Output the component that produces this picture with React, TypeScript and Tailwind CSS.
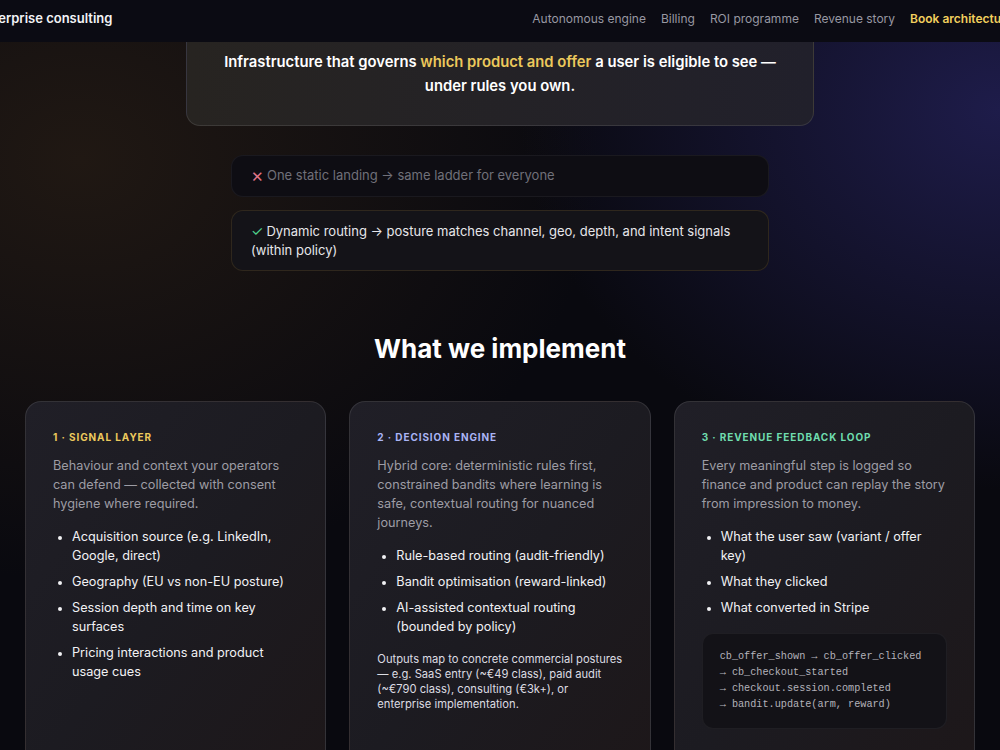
import {ReactNode} from "react";

type Pillar = {
	label: string;
	labelColor: string;
	intro: string;
	bullets: string[];
	extra?: ReactNode;
}

const navLinks = ["Autonomous engine", "Billing", "ROI programme", "Revenue story"];

const pillars: Pillar[] = [
	{
		label: "1 · Signal layer",
		labelColor: "text-[#ecc95c]",
		intro: "Behaviour and context your operators can defend — collected with consent hygiene where required.",
		bullets: [
			"Acquisition source (e.g. LinkedIn, Google, direct)",
			"Geography (EU vs non-EU posture)",
			"Session depth and time on key surfaces",
			"Pricing interactions and product usage cues",
		],
	},
	{
		label: "2 · Decision engine",
		labelColor: "text-[#aab4f5]",
		intro: "Hybrid core: deterministic rules first, constrained bandits where learning is safe, contextual routing for nuanced journeys.",
		bullets: [
			"Rule-based routing (audit-friendly)",
			"Bandit optimisation (reward-linked)",
			"AI-assisted contextual routing (bounded by policy)",
		],
		extra: (
			<p className="mt-[16px] text-[11.2px] leading-[15px] text-[#dcdce2]">
				Outputs map to concrete commercial postures — e.g. SaaS entry (~€49 class), paid audit (~€790 class), consulting (€3k+), or enterprise implementation.
			</p>
		),
	},
	{
		label: "3 · Revenue feedback loop",
		labelColor: "text-[#6fdcae]",
		intro: "Every meaningful step is logged so finance and product can replay the story from impression to money.",
		bullets: [
			"What the user saw (variant / offer key)",
			"What they clicked",
			"What converted in Stripe",
		],
		extra: (
			<div className="mt-[16px] rounded-[11px] border border-white/5 bg-[#131217] px-[17px] py-[15px] font-['Liberation_Mono',monospace] text-[10.2px] leading-[16px] text-[#b4b3bb]">
				<div>cb_offer_shown → cb_offer_clicked</div>
				<div>→ cb_checkout_started</div>
				<div>→ checkout.session.completed</div>
				<div>→ bandit.update(arm, reward)</div>
			</div>
		),
	},
];

function PillarCard({pillar}: {pillar: Pillar}) {
	return (
		<div className="h-[380px] rounded-[16px] border border-white/10 bg-gradient-to-br from-[#201f27] via-[#1c1b21] to-[#1d1719] px-[27px] pt-[28px]">
			<div className={`text-[10px] font-bold uppercase leading-[14px] tracking-[0.09em] ${pillar.labelColor}`}>
				{pillar.label}
			</div>
			<p className="mt-[12px] text-[12.7px] leading-[19px] text-[#9d9ca4]">{pillar.intro}</p>
			<ul className="mt-[14px] flex flex-col gap-[7px] pl-[19px]">
				{pillar.bullets.map((b) => (
					<li key={b} className="list-disc text-[12.7px] leading-[19px] text-[#f1f1f4] marker:text-[11px]">
						{b}
					</li>
				))}
			</ul>
			{pillar.extra}
		</div>
	);
}

export default function App() {
	return (
		<div className="relative h-[750px] w-[1000px] overflow-hidden bg-[#09090f] font-['Inter','Noto_Sans',sans-serif]">
			{/* backdrop glows */}
			<div className="absolute inset-0 bg-[radial-gradient(ellipse_520px_420px_at_80px_160px,#201813_0%,transparent_100%)]"/>
			<div className="absolute inset-0 bg-[radial-gradient(ellipse_480px_380px_at_1000px_110px,#1e1c4a_0%,transparent_100%)]"/>

			<header className="absolute left-0 right-0 top-0 z-10 h-[42px] overflow-hidden bg-[#0b0b13] pb-[5px]">
				<div className="-ml-[22px] -mr-[36px] flex h-full items-center justify-between">
					<span className="text-[13px] font-semibold text-[#f3f3f6]">Enterprise consulting</span>
					<nav className="flex items-center gap-[15px] text-[12px]">
						{navLinks.map((n) => (
							<span key={n} className="text-[#9898a2]">{n}</span>
						))}
						<span className="font-semibold text-[#f1cf5e]">Book architecture call</span>
					</nav>
				</div>
			</header>

			<main className="relative flex flex-col items-center">
				<div className="w-[628px] rounded-b-[14px] border border-t-0 border-white/10 bg-gradient-to-r from-[#272421] to-[#21202b] px-[30px] pb-[27px] pt-[50px] text-center text-[14.8px] font-semibold leading-[24px] text-white">
					Infrastructure that governs <span className="text-[#ecc95c]">which product and offer</span> a user is eligible to see — under rules you own.
				</div>

				<div className="mt-[29px] flex w-[538px] flex-col gap-[13px]">
					<div className="flex h-[42px] items-center rounded-[12px] border border-white/5 bg-[#0e0d13] px-[19px] text-[13px] text-[#707079]">
						<span className="mr-[3px] text-[15px] leading-none text-[#e07587]">✕</span>One static landing → same ladder for everyone
					</div>
					<div className="rounded-[12px] border border-[#3a3020]/70 bg-[#141318] px-[19px] py-[10px] text-[13px] leading-[19px] text-[#e6e6ea]">
						<span className="mr-[3px] text-[14px] text-[#4fd18b]">✓</span>Dynamic routing → posture matches channel, geo, depth, and intent signals (within policy)
					</div>
				</div>

				<h2 className="mt-[62px] text-[26px] font-bold leading-[32px] text-white">What we implement</h2>

				<div className="mt-[36px] grid w-full grid-cols-3 gap-[23px] px-[25px]">
					{pillars.map((p) => (
						<PillarCard key={p.label} pillar={p}/>
					))}
				</div>
			</main>
		</div>
	);
}
